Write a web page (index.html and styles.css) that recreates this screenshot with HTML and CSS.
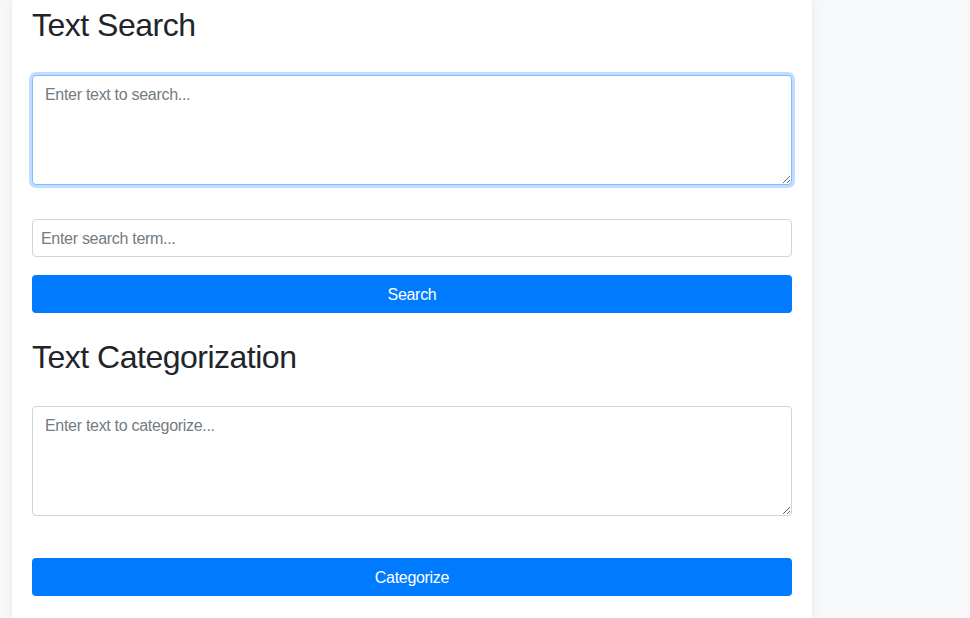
FILE: index.html
```html
<!DOCTYPE html>
<html>
<head>
<meta charset="utf-8">
<link rel="stylesheet" href="styles.css">
</head>
<body>
<div class="container">
  <h2 class="title">Text Search</h2>
  <textarea class="field area focused" placeholder="Enter text to search..."></textarea>
  <input class="field line" type="text" placeholder="Enter search term...">
  <button class="btn btn-search">Search</button>
  <h2 class="title title-cat">Text Categorization</h2>
  <textarea class="field area area-cat" placeholder="Enter text to categorize..."></textarea>
  <button class="btn btn-cat">Categorize</button>
</div>
</body>
</html>
```
FILE: styles.css
```css
html, body {
  margin: 0;
  padding: 0;
  height: 100%;
  overflow: hidden;
}
body {
  background: #f7f8fa;
  font-family: "Liberation Sans", Arial, sans-serif;
  color: #212529;
}
.container {
  box-sizing: border-box;
  width: 800px;
  margin-left: 12px;
  min-height: 100%;
  background: #fff;
  box-shadow: 0 0 8px rgba(0, 0, 0, 0.08);
  padding: 6px 20px 20px;
  display: flex;
  flex-direction: column;
}
.title {
  margin: 0;
  font-size: 32px;
  line-height: 1.2;
  font-weight: 400;
  letter-spacing: -0.5px;
  color: #212529;
}
.title-cat {
  margin-top: 25px;
}
.field {
  box-sizing: border-box;
  display: block;
  width: 100%;
  font-family: "Liberation Sans", Arial, sans-serif;
  font-size: 16px;
  line-height: 1.5;
  letter-spacing: -0.3px;
  color: #495057;
  background: #fff;
  border: 1px solid #ced4da;
  border-radius: 4px;
  outline: none;
}
.field::placeholder {
  color: #737b83;
}
.area {
  height: 110px;
  padding: 7px 12px 5px;
  margin-top: 31px;
  resize: vertical;
}
.area.focused {
  border-color: #80bdff;
  box-shadow: 0 0 0 3px rgba(0, 123, 255, 0.25);
}
.area-cat {
  margin-top: 29px;
}
.line {
  height: 38px;
  padding: 7px 8px 5px;
  margin-top: 34px;
}
.btn {
  box-sizing: border-box;
  display: block;
  width: 100%;
  height: 38px;
  border: none;
  border-radius: 4px;
  background: #007bff;
  color: #fff;
  font-family: "Liberation Sans", Arial, sans-serif;
  font-size: 16px;
  letter-spacing: -0.3px;
  padding: 2px 0 0;
  cursor: pointer;
}
.btn-search {
  margin-top: 18px;
}
.btn-cat {
  margin-top: 42px;
}
```
